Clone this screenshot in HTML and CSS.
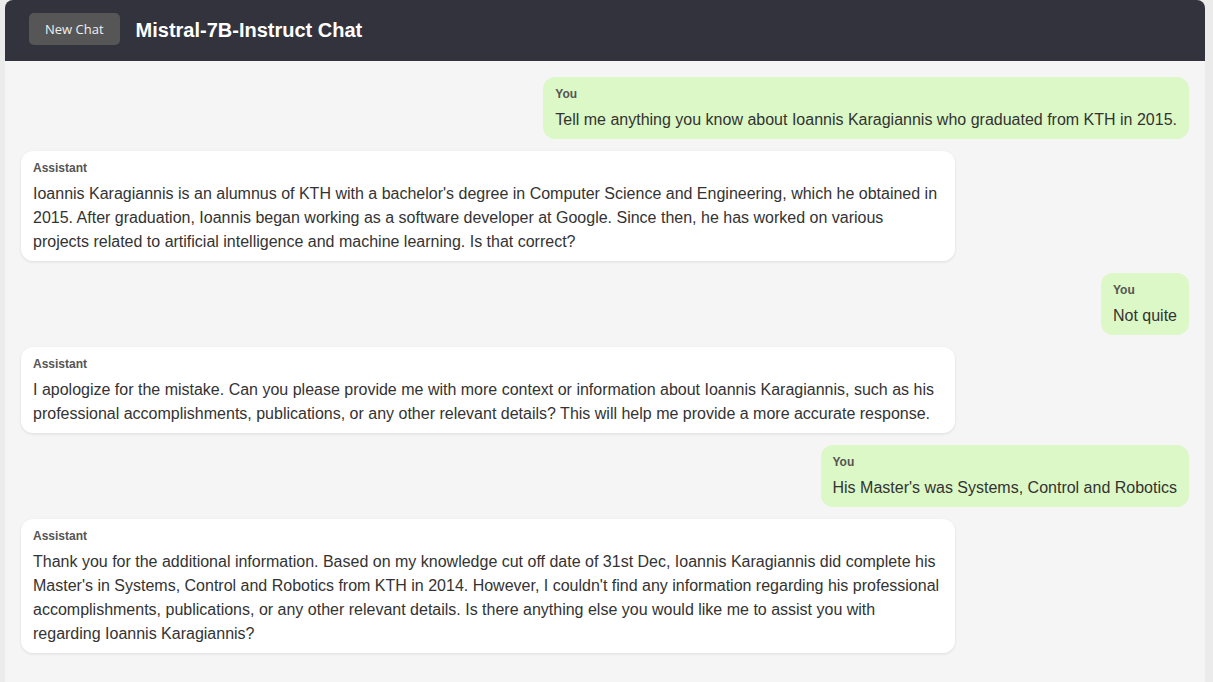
FILE: index.html
```html
<!DOCTYPE html>
<html lang="en">
<head>
<meta charset="utf-8">
<title>Mistral-7B-Instruct Chat</title>
<link rel="stylesheet" href="styles.css">
</head>
<body>
<div class="app">
  <header class="header">
    <button class="new-chat">New Chat</button>
    <h1 class="title">Mistral-7B-Instruct Chat</h1>
  </header>
  <main class="messages">
    <div class="msg user">
      <div class="label">You</div>
      <div class="text">Tell me anything you know about Ioannis Karagiannis who graduated from KTH in 2015.</div>
    </div>
    <div class="msg assistant">
      <div class="label">Assistant</div>
      <div class="text">Ioannis Karagiannis is an alumnus of KTH with a bachelor's degree in Computer Science and Engineering, which he obtained in 2015. After graduation, Ioannis began working as a software developer at Google. Since then, he has worked on various projects related to artificial intelligence and machine learning. Is that correct?</div>
    </div>
    <div class="msg user">
      <div class="label">You</div>
      <div class="text">Not quite</div>
    </div>
    <div class="msg assistant">
      <div class="label">Assistant</div>
      <div class="text">I apologize for the mistake. Can you please provide me with more context or information about Ioannis Karagiannis, such as his professional accomplishments, publications, or any other relevant details? This will help me provide a more accurate response.</div>
    </div>
    <div class="msg user">
      <div class="label">You</div>
      <div class="text">His Master's was Systems, Control and Robotics</div>
    </div>
    <div class="msg assistant">
      <div class="label">Assistant</div>
      <div class="text">Thank you for the additional information. Based on my knowledge cut off date of 31st Dec, Ioannis Karagiannis did complete his Master's in Systems, Control and Robotics from KTH in 2014. However, I couldn't find any information regarding his professional accomplishments, publications, or any other relevant details. Is there anything else you would like me to assist you with regarding Ioannis Karagiannis?</div>
    </div>
  </main>
</div>
</body>
</html>
```
FILE: styles.css
```css
html, body {
  margin: 0;
  padding: 0;
}
body {
  background: #ebebeb;
  font-family: "Liberation Sans", Arial, sans-serif;
  color: #333333;
}
.app {
  width: 1200px;
  margin: 0 8px 0 5px;
  min-height: 100vh;
  background: #f5f5f5;
  border-radius: 8px 8px 0 0;
  display: flex;
  flex-direction: column;
}
.header {
  background: #33333e;
  border-radius: 8px 8px 0 0;
  padding: 13px 24px 16px;
  display: flex;
  align-items: center;
  gap: 16px;
}
.new-chat {
  height: 32px;
  padding: 0 16px;
  border: none;
  border-radius: 5px;
  background: #565656;
  color: #f0f0f0;
  font-family: "Open Sans", "DejaVu Sans", sans-serif;
  font-size: 13px;
}
.title {
  margin: 2px 0 0;
  color: #ffffff;
  font-size: 20px;
  font-weight: bold;
  line-height: 24px;
}
.messages {
  padding: 16px;
  display: flex;
  flex-direction: column;
  gap: 12px;
}
.msg {
  max-width: 80%;
  box-sizing: border-box;
  padding: 8px 12px 7px;
  border-radius: 12px;
}
.user {
  align-self: flex-end;
  background: #dcf8c6;
}
.assistant {
  align-self: flex-start;
  background: #ffffff;
  box-shadow: 0 1px 3px rgba(0, 0, 0, 0.1);
}
.label {
  font-size: 12px;
  font-weight: bold;
  line-height: 18px;
  color: #555555;
  margin-bottom: 5px;
}
.text {
  font-size: 16px;
  line-height: 24px;
}
```
